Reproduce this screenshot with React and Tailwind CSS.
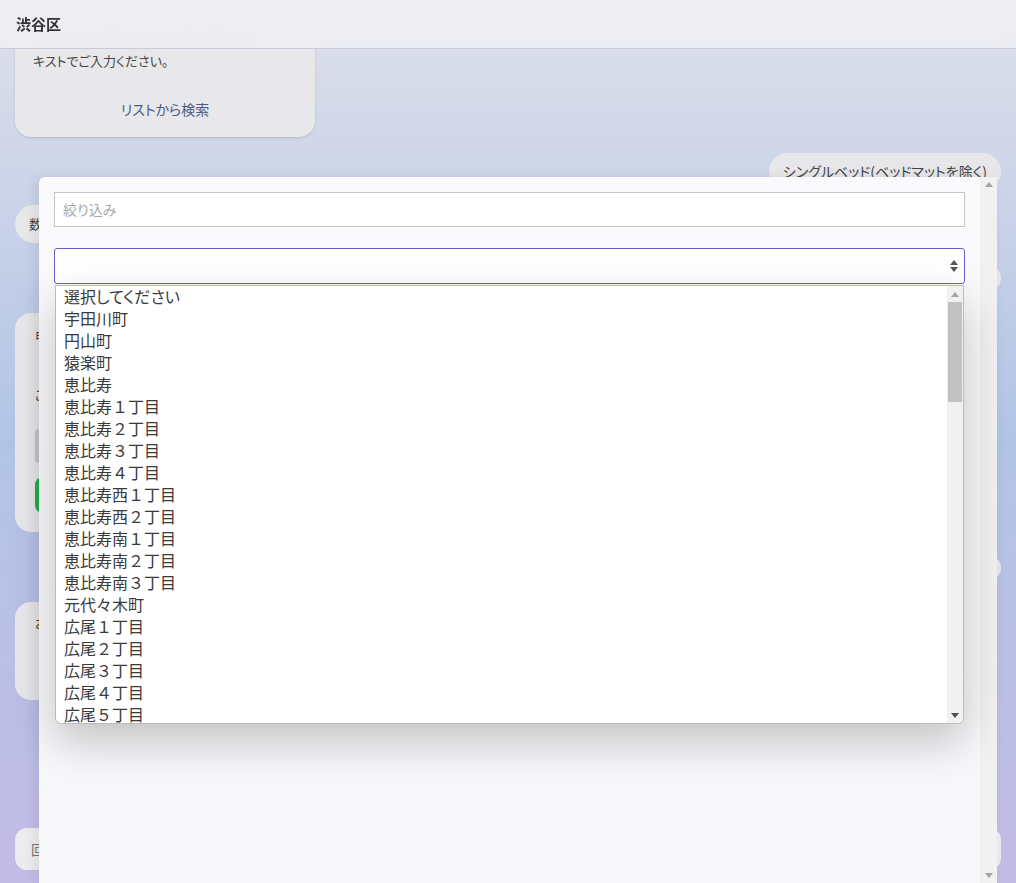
import React from 'react';

const items = [
  { t: '選択してください', kana: true },
  { t: '宇田川町' },
  { t: '円山町' },
  { t: '猿楽町' },
  { t: '恵比寿' },
  { t: '恵比寿１丁目' },
  { t: '恵比寿２丁目' },
  { t: '恵比寿３丁目' },
  { t: '恵比寿４丁目' },
  { t: '恵比寿西１丁目' },
  { t: '恵比寿西２丁目' },
  { t: '恵比寿南１丁目' },
  { t: '恵比寿南２丁目' },
  { t: '恵比寿南３丁目' },
  { t: '元代々木町' },
  { t: '広尾１丁目' },
  { t: '広尾２丁目' },
  { t: '広尾３丁目' },
  { t: '広尾４丁目' },
  { t: '広尾５丁目' },
];

const Caret = ({ up }) => (
  <svg width="8" height="5" viewBox="0 0 8 5" className="block">
    <path d={up ? 'M0 5 L4 0 L8 5 Z' : 'M0 0 L4 5 L8 0 Z'} fill="currentColor" />
  </svg>
);

const App = () => {
  return (
    <div
      className="relative w-[1016px] h-[883px] overflow-hidden bg-gradient-to-b from-[#dfe0ea] via-[#b2c4e6] to-[#c3bbe5] text-[#333] [font-feature-settings:'palt']"
      style={{ fontFamily: '"Noto Sans CJK JP", "Noto Sans", sans-serif' }}
    >
      {/* chat behind the modal */}
      <div className="flex flex-col px-[15px] pt-[14px]">
        <div className="w-[300px] h-[123px] rounded-2xl bg-[#e8e8ea] shadow-sm flex flex-col px-[18px] pt-[14px]">
          <p className="text-[13px] leading-[22px] text-[#555] blur-[1px]">入力された住所がリストに無い場合はテ</p>
          <p className="text-[13px] leading-[22px] text-[#444]">キストでご入力ください。</p>
          <p className="mt-[27px] text-center text-[14px] text-[#4b5a88]">リストから検索</p>
        </div>
        <div className="mt-[16px] self-end rounded-full bg-[#e7e7ea] px-[14px] h-[37px] flex items-center text-[14px] text-[#444]">
          シングルベッド(ベッドマットを除く)
        </div>
        <div className="mt-[15px] self-start rounded-full bg-[#e7e7ea] px-[14px] h-[38px] flex items-center text-[13px] text-[#444]">
          数量を選択
        </div>
        <div className="mt-[22px] self-end rounded-full bg-[#e7e7ea] h-[26px] w-[80px]" />
        <div className="mt-[22px] w-[300px] h-[219px] rounded-2xl bg-[#e8e8ea] flex flex-col px-[20px] pt-[12px]">
          <p className="text-[13px] leading-[22px] text-[#444]">申込内容</p>
          <p className="mt-[38px] text-[13px] leading-[20px] text-[#444]">ご希望</p>
          <div className="mt-[24px] h-[34px] rounded bg-[#c8c8cc]" />
          <div className="mt-[14px] h-[36px] rounded-lg bg-[#22b04b]" />
        </div>
        <div className="mt-[23px] self-end rounded-full bg-[#e7e7ea] h-[26px] w-[80px]" />
        <div className="mt-[21px] w-[300px] h-[98px] rounded-2xl bg-[#e8e8ea] px-[20px] pt-[10px]">
          <p className="text-[13px] leading-[22px] text-[#444]">お申込み</p>
        </div>
        <div className="mt-[128px] flex items-center gap-[8px]">
          <div className="flex-1 h-[42px] rounded-xl bg-[#ececee] flex items-center px-[16px] text-[14px] text-[#777]">
            回答を入力
          </div>
          <div className="w-[40px] h-[42px] rounded-xl bg-[#ececee] flex items-center justify-center text-[#3a3ad0]">
            <svg width="10" height="10" viewBox="0 0 10 10">
              <path d="M1 1 L9 5 L1 9 Z" fill="currentColor" />
            </svg>
          </div>
        </div>
      </div>

      {/* header */}
      <div className="absolute top-0 left-0 right-0 h-[49px] bg-[#ededf2]/95 backdrop-blur-sm border-b border-[#c9cbdb] flex items-center px-[16px]">
        <span className="text-[15px] font-bold text-[#333]">渋谷区</span>
      </div>

      {/* modal */}
      <div className="absolute top-[177px] left-[39px] right-[19px] bottom-0 rounded-tl-md bg-gradient-to-b from-[#fafafc] to-[#f8f8fa] shadow-[-4px_0_12px_rgba(0,0,0,0.08)] flex">
        <div className="relative flex-1 flex flex-col px-[15px] pt-[15px]">
          <div className="h-[35px] border border-[#c4c4c4] bg-white flex items-center px-[8px] text-[14px] text-[#aaa]">
            絞り込み
          </div>
          <div className="mt-[21px] h-[36px] border border-[#6a5fc8] rounded-[3px] bg-white flex items-center justify-end px-[6px] text-[#555]">
            <div className="flex flex-col gap-[2px]">
              <Caret up />
              <Caret />
            </div>
          </div>

          {/* open listbox */}
          <div className="absolute top-[108px] left-[16px] right-[16px] h-[439px] bg-white border border-[#bbb] rounded-b-md shadow-[0_18px_45px_rgba(0,0,0,0.22)] flex overflow-hidden">
            <ul className="flex-1 -mt-[1px]">
              {items.map((it) => (
                <li
                  key={it.t}
                  className={
                    it.kana
                      ? 'h-[22px] leading-[22px] pl-[8px] text-[16px] text-[#3a3a3a]'
                      : 'h-[22px] leading-[22px] pl-[8px] text-[16px] text-[#3a3a3a] [font-feature-settings:normal]'
                  }
                >
                  {it.t}
                </li>
              ))}
            </ul>
            <div className="w-[16px] bg-[#f1f1f1] flex flex-col items-center">
              <div className="h-[16px] flex items-center justify-center text-[#a3a3a3]">
                <Caret up />
              </div>
              <div className="w-[14px] h-[100px] bg-[#c1c1c1]" />
              <div className="flex-1" />
              <div className="h-[16px] flex items-center justify-center text-[#505050]">
                <Caret />
              </div>
            </div>
          </div>
        </div>
        {/* modal scrollbar */}
        <div className="w-[17px] bg-[#f1f1f1] flex flex-col items-center justify-between py-[5px] text-[#a3a3a3]">
          <Caret up />
          <Caret />
        </div>
      </div>
    </div>
  );
};

export default App;
